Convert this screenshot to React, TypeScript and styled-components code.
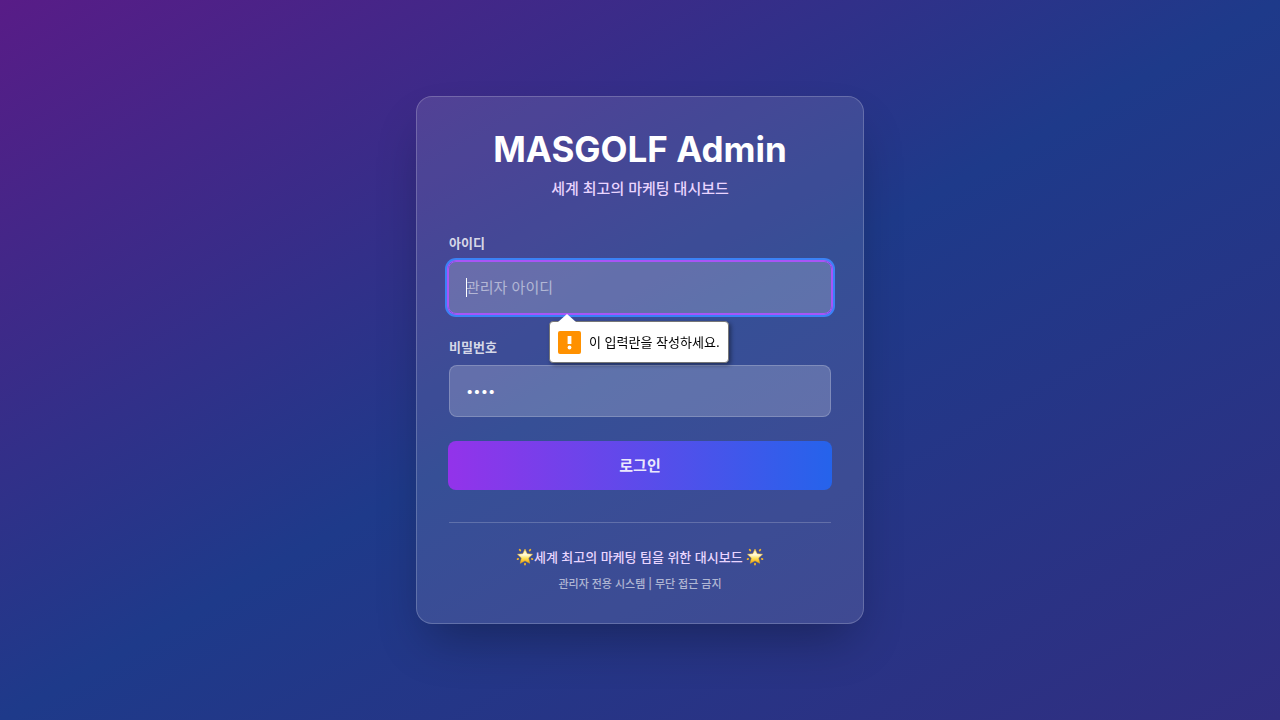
import React, { useState } from 'react';
import styled, { createGlobalStyle } from 'styled-components';

const GlobalStyle = createGlobalStyle`
  *, *::before, *::after { box-sizing: border-box; }
  body {
    margin: 0;
    font-family: Inter, 'Noto Sans CJK KR', sans-serif;
    -webkit-font-smoothing: antialiased;
  }
  h1, p { margin: 0; }
`;

const Page = styled.main`
  min-height: 100vh;
  display: flex;
  align-items: center;
  justify-content: center;
  padding: 16px;
  background: linear-gradient(to bottom right, #581c87, #1e3a8a, #312e81);
`;

const Card = styled.section`
  width: 100%;
  max-width: 448px;
  padding: 32px;
  border: 1px solid rgba(255, 255, 255, 0.2);
  border-radius: 16px;
  background: rgba(255, 255, 255, 0.11);
  box-shadow: 0 25px 50px -12px rgba(0, 0, 0, 0.3);
`;

const Header = styled.header`
  display: flex;
  flex-direction: column;
  gap: 8px;
  margin-bottom: 32px;
  text-align: center;
`;

const Title = styled.h1`
  color: #fff;
  font-size: 35px;
  font-weight: 700;
  line-height: 40px;
`;

const Subtitle = styled.p`
  color: #e9d5ff;
  font-size: 15px;
  font-weight: 500;
  line-height: 24px;
`;

const Form = styled.form`
  display: flex;
  flex-direction: column;
  gap: 24px;
`;

const Field = styled.div`
  position: relative;
  display: flex;
  flex-direction: column;
  gap: 8px;
`;

const Label = styled.label`
  color: rgba(255, 255, 255, 0.8);
  font-size: 13px;
  font-weight: 600;
  line-height: 20px;
`;

const InputBox = styled.div`
  position: relative;
  display: flex;
  margin: 0 -1px -1px;
`;

const Input = styled.input<{ $active?: boolean }>`
  width: 100%;
  height: ${p => (p.$active ? '53px' : '52px')};
  padding: 0 ${p => (p.$active ? '17px' : '16px')};
  border: 1px solid ${p => (p.$active ? '#a855f7' : 'rgba(255, 255, 255, 0.2)')};
  border-radius: 8px;
  outline: none;
  background: rgba(255, 255, 255, 0.2);
  box-shadow: ${p => (p.$active ? '0 0 0 1px #a855f7, 0 0 0 3px #3b82f6' : 'none')};
  color: #fff;
  caret-color: #fff;
  font-family: inherit;
  font-size: 15px;
  line-height: 24px;

  &::placeholder { color: rgba(255, 255, 255, 0.5); }
  &[type='password'] { font-size: 13px; }
  &:placeholder-shown { caret-color: transparent; }
`;

const Caret = styled.span`
  position: absolute;
  top: 17px;
  left: 18px;
  width: 1px;
  height: 19px;
  background: #fff;
  pointer-events: none;
`;

const Bubble = styled.div`
  position: absolute;
  z-index: 1;
  top: calc(100% + 8px);
  left: 100px;
  display: flex;
  align-items: center;
  gap: 8px;
  padding: 8px;
  border: 1px solid #777;
  border-radius: 4px;
  background: #fff;
  box-shadow: 2px 2px 4px rgba(0, 0, 0, 0.4);
  color: #000;
  font-size: 13px;
  line-height: 24px;
  white-space: nowrap;
`;

const BubbleArrow = styled.svg`
  position: absolute;
  bottom: 100%;
  left: 8px;
`;

const SubmitButton = styled.button`
  margin: 0 -1px;
  padding: 12px 16px;
  border: 0;
  border-radius: 8px;
  background: linear-gradient(to right, #9333ea, #2563eb);
  color: rgba(255, 255, 255, 0.9);
  font-family: inherit;
  font-size: 15px;
  font-weight: 600;
  line-height: 25px;
  cursor: pointer;
`;

const Footer = styled.footer`
  display: flex;
  flex-direction: column;
  align-items: center;
  gap: 10px;
  margin-top: 32px;
  padding-top: 24px;
  border-top: 1px solid rgba(255, 255, 255, 0.2);
`;

const Tagline = styled.p`
  display: flex;
  align-items: center;
  color: #e9d5ff;
  font-size: 13px;
  font-weight: 500;
  line-height: 20px;
`;

const Notice = styled.p`
  color: rgba(255, 255, 255, 0.6);
  font-size: 11px;
  font-weight: 500;
  line-height: 14px;
`;

function GlowingStar() {
  return (
    <svg width="18" height="18" viewBox="0 0 18 18" aria-hidden="true">
      <defs>
        <linearGradient id="star" x1="0" y1="0" x2="0" y2="1">
          <stop offset="0" stopColor="#ffe98a" />
          <stop offset="0.4" stopColor="#fffbe0" />
          <stop offset="0.65" stopColor="#fee258" />
          <stop offset="1" stopColor="#f5a000" />
        </linearGradient>
      </defs>
      <g stroke="#eeb32b" strokeWidth="1.8" strokeLinecap="round">
        <path d="M3.7 1.7l.6.9M14.3 1.7l-.6.9M1.6 11.1l.6-.2M16.4 11.1l-.6-.2M9 15.6v1" />
      </g>
      <path
        d="M9 1l2.2 4.7 5.4.6-4 3.7 1.1 5.3L9 12.8l-4.7 2.5 1.1-5.3-4-3.7 5.4-.6z"
        fill="url(#star)"
        stroke="#f1b41d"
        strokeWidth=".5"
        strokeLinejoin="round"
      />
    </svg>
  );
}

export default function App() {
  const [username, setUsername] = useState('');
  const [password, setPassword] = useState('1234');

  return (
    <>
      <GlobalStyle />
      <Page>
        <Card>
          <Header>
            <Title>MASGOLF Admin</Title>
            <Subtitle>세계 최고의 마케팅 대시보드</Subtitle>
          </Header>
          <Form noValidate onSubmit={e => e.preventDefault()}>
            <Field>
              <Label htmlFor="username">아이디</Label>
              <InputBox>
                <Input
                  id="username"
                  $active
                  autoFocus
                  required
                  placeholder="관리자 아이디"
                  value={username}
                  onChange={e => setUsername(e.target.value)}
                />
                {username === '' && <Caret />}
              </InputBox>
              <Bubble role="alert">
                <BubbleArrow width="18" height="8" viewBox="0 0 18 8" aria-hidden="true">
                  <path d="M0 8L9 0l9 8z" fill="#fff" />
                </BubbleArrow>
                <svg width="23" height="23" viewBox="0 0 23 23" aria-hidden="true">
                  <rect width="23" height="23" rx="2" fill="#ff9100" />
                  <path d="M9.6 5h3.8v8H9.6z" fill="#fff" />
                  <circle cx="11.5" cy="16.5" r="1.9" fill="#fff" />
                </svg>
                <span>이 입력란을 작성하세요.</span>
              </Bubble>
            </Field>
            <Field>
              <Label htmlFor="password">비밀번호</Label>
              <Input
                id="password"
                type="password"
                required
                value={password}
                onChange={e => setPassword(e.target.value)}
              />
            </Field>
            <SubmitButton type="submit">로그인</SubmitButton>
          </Form>
          <Footer>
            <Tagline>
              <GlowingStar />
              <span>세계 최고의 마케팅 팀을 위한 대시보드&nbsp;</span>
              <GlowingStar />
            </Tagline>
            <Notice>관리자 전용 시스템 | 무단 접근 금지</Notice>
          </Footer>
        </Card>
      </Page>
    </>
  );
}
